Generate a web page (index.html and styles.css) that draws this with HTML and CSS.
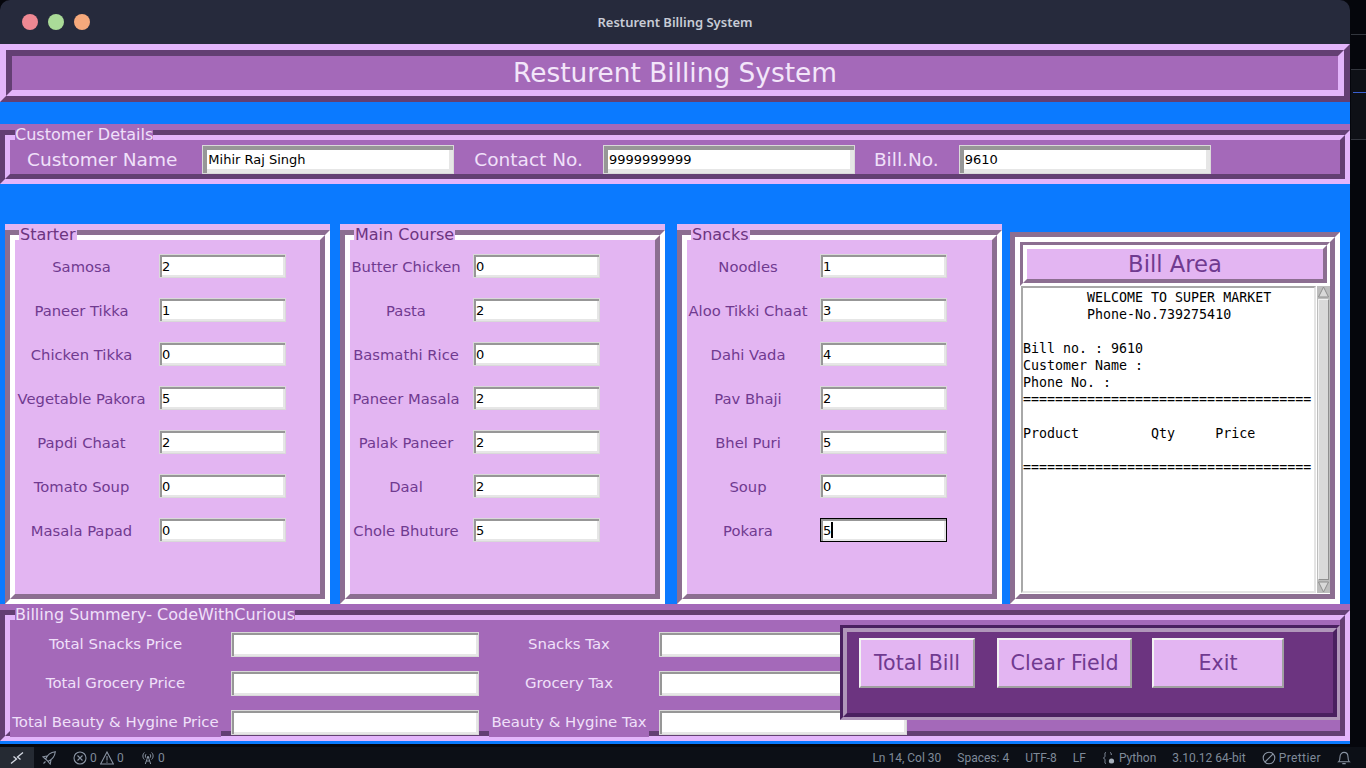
FILE: index.html
```html
<!DOCTYPE html>
<html lang="en">
<head>
<meta charset="utf-8">
<title>Resturent Billing System</title>
<link rel="stylesheet" href="styles.css">
</head>
<body>
<div class="screen">
  <div class="top">
    <div class="window">
      <header class="titlebar">
        <div class="lights"><span class="light red"></span><span class="light green"></span><span class="light orange"></span></div>
        <div class="wintitle">Resturent Billing System</div>
      </header>
      <div class="app">
        <div class="heading"><div class="heading-in">Resturent Billing System</div></div>

        <section class="lframe customer">
          <div class="legend">Customer Details</div>
          <div class="ridge"><div class="ridge-in customer-row">
            <div class="clabel first">Customer Name</div><div class="entry big">Mihir Raj Singh</div>
            <div class="clabel">Contact No.</div><div class="entry big">9999999999</div>
            <div class="clabel third">Bill.No.</div><div class="entry big">9610</div>
          </div></div>
        </section>

        <div class="mainrow">
          <section class="panel starter">
            <div class="plegend">Starter</div>
            <div class="pridge"><div class="pridge-in items">
              <div class="ilabel">Samosa</div><div class="entry">2</div>
              <div class="ilabel">Paneer Tikka</div><div class="entry">1</div>
              <div class="ilabel">Chicken Tikka</div><div class="entry">0</div>
              <div class="ilabel">Vegetable Pakora</div><div class="entry">5</div>
              <div class="ilabel">Papdi Chaat</div><div class="entry">2</div>
              <div class="ilabel">Tomato Soup</div><div class="entry">0</div>
              <div class="ilabel">Masala Papad</div><div class="entry">0</div>
            </div></div>
          </section>
          <section class="panel main">
            <div class="plegend">Main Course</div>
            <div class="pridge"><div class="pridge-in items">
              <div class="ilabel">Butter Chicken</div><div class="entry">0</div>
              <div class="ilabel">Pasta</div><div class="entry">2</div>
              <div class="ilabel">Basmathi Rice</div><div class="entry">0</div>
              <div class="ilabel">Paneer Masala</div><div class="entry">2</div>
              <div class="ilabel">Palak Paneer</div><div class="entry">2</div>
              <div class="ilabel">Daal</div><div class="entry">2</div>
              <div class="ilabel">Chole Bhuture</div><div class="entry">5</div>
            </div></div>
          </section>
          <section class="panel snacks">
            <div class="plegend">Snacks</div>
            <div class="pridge"><div class="pridge-in items">
              <div class="ilabel">Noodles</div><div class="entry">1</div>
              <div class="ilabel">Aloo Tikki Chaat</div><div class="entry">3</div>
              <div class="ilabel">Dahi Vada</div><div class="entry">4</div>
              <div class="ilabel">Pav Bhaji</div><div class="entry">2</div>
              <div class="ilabel">Bhel Puri</div><div class="entry">5</div>
              <div class="ilabel">Soup</div><div class="entry">0</div>
              <div class="ilabel">Pokara</div><div class="entry focus">5<span class="caret"></span></div>
            </div></div>
          </section>
          <section class="panel bill">
            <div class="pridge"><div class="pridge-in billin">
              <div class="billhead"><div class="billhead-in">Bill Area</div></div>
              <div class="billbody">
                <pre class="billtext">        WELCOME TO SUPER MARKET
        Phone-No.739275410

Bill no. : 9610
Customer Name : 
Phone No. : 
====================================

Product         Qty     Price

====================================</pre>
                <div class="scrollbar">
                  <svg class="arrow" viewBox="0 0 13 12" width="13" height="12"><path d="M6.5 1 L11.5 11 H1.5 Z" fill="#d9d9d9" stroke="#8f8f8f" stroke-width="1"/></svg>
                  <div class="thumb"></div>
                  <svg class="arrow" viewBox="0 0 13 12" width="13" height="12"><path d="M1.5 1 H11.5 L6.5 11 Z" fill="#d9d9d9" stroke="#8f8f8f" stroke-width="1"/></svg>
                </div>
              </div>
            </div></div>
          </section>
        </div>

        <section class="lframe summary">
          <div class="legend">Billing Summery- CodeWithCurious</div>
          <div class="ridge"><div class="ridge-in sumgrid">
            <div class="slabel">Total Snacks Price</div><div class="entry wide"></div>
            <div class="slabel">Snacks Tax</div><div class="entry wide"></div>
            <div class="slabel">Total Grocery Price</div><div class="entry wide"></div>
            <div class="slabel">Grocery Tax</div><div class="entry wide"></div>
            <div class="slabel">Total Beauty &amp; Hygine Price</div><div class="entry wide"></div>
            <div class="slabel">Beauty &amp; Hygine Tax</div><div class="entry wide"></div>
          </div></div>
          <div class="btnbox"><div class="btnbox-in">
            <button class="btn b1">Total Bill</button>
            <button class="btn b2">Clear Field</button>
            <button class="btn b3">Exit</button>
          </div></div>
        </section>
      </div>
    </div>
    <aside class="strip">
      <div class="strip-a"></div>
      <div class="strip-b"><div class="strip-blue"></div></div>
    </aside>
  </div>
  <footer class="status">
    <div class="remote">
      <svg viewBox="0 0 14 14" width="14" height="14"><path d="M1 12.5 L6.5 8 L3.5 5.5 M13 1.5 L7.5 6 L10.5 8.5" fill="none" stroke="#d5dae3" stroke-width="1.3"/></svg>
    </div>
    <div class="sleft">
      <svg class="rocket" viewBox="0 0 14 14" width="14" height="14"><path d="M13.3 .7 C8.5 1.2 5.3 4 3.6 8 L6 10.4 C10 8.7 12.8 5.5 13.3 .7 Z M4.8 5 L1 5.8 L3.5 8 M9 9.2 L8.2 13 L6 10.5 M3.5 10.5 L1.5 12.5" fill="none" stroke="#8a94a3" stroke-width="1.1"/></svg>
      <svg class="err" viewBox="0 0 14 14" width="14" height="14"><circle cx="7" cy="7" r="6" fill="none" stroke="#8a94a3" stroke-width="1.1"/><path d="M4.5 4.5 L9.5 9.5 M9.5 4.5 L4.5 9.5" stroke="#8a94a3" stroke-width="1.1"/></svg>
      <span class="num">0</span>
      <svg class="warn" viewBox="0 0 14 14" width="14" height="14"><path d="M7 1 L13.4 13 H.6 Z M7 5 V9.5 M7 10.5 V11.8" fill="none" stroke="#8a94a3" stroke-width="1.1"/></svg>
      <span class="num">0</span>
      <svg class="radio" viewBox="0 0 14 14" width="14" height="14"><path d="M4.3 13 L7 5 L9.7 13 M5.3 10 H8.7 M3.4 1.5 C1.4 3.5 1.4 6.5 3.4 8.5 M10.6 1.5 C12.6 3.5 12.6 6.5 10.6 8.5 M5 3.2 C4.1 4.2 4.1 5.8 5 6.8 M9 3.2 C9.9 4.2 9.9 5.8 9 6.8" fill="none" stroke="#8a94a3" stroke-width="1"/></svg>
      <span class="num">0</span>
    </div>
    <div class="sright">
      <span>Ln 14, Col 30</span>
      <span>Spaces: 4</span>
      <span>UTF-8</span>
      <span>LF</span>
      <span class="pair"><svg viewBox="0 0 14 14" width="14" height="14"><path d="M4 1.5 C2.5 1.5 3 3 3 4.5 C3 6 2.5 6.5 1.5 7 C2.5 7.5 3 8 3 9.5 C3 11 2.5 12.5 4 12.5 M8 1.5 C9 1.5 9.3 2.5 9.3 4" fill="none" stroke="#8a94a3" stroke-width="1"/><circle cx="9.5" cy="10" r="2.6" fill="#a5aeba"/></svg>Python</span>
      <span>3.10.12 64-bit</span>
      <span class="pair"><svg viewBox="0 0 14 14" width="14" height="14"><circle cx="7" cy="7" r="5.8" fill="none" stroke="#8a94a3" stroke-width="1.1"/><path d="M3 11 L11 3" stroke="#8a94a3" stroke-width="1.1"/></svg><span class="pretty">Prettier</span></span>
      <svg class="bell" viewBox="0 0 14 14" width="14" height="14"><path d="M1.6 10.8 C3 9.6 3 8 3 6 C3 3 5 1.4 7 1.4 C9 1.4 11 3 11 6 C11 8 11 9.6 12.4 10.8 Z M5.3 12.6 H8.7" fill="none" stroke="#8a94a3" stroke-width="1.1"/></svg>
    </div>
  </footer>
</div>
</body>
</html>
```
FILE: styles.css
```css
* { box-sizing: border-box; }
html, body { margin: 0; padding: 0; background: #05060c; overflow: hidden; }
body { font-family: "DejaVu Sans", sans-serif; }

.screen { width: 1366px; height: 768px; display: flex; flex-direction: column; background: #05060c; }
.top { display: flex; height: 744px; }
.window { width: 1350px; display: flex; flex-direction: column; }

.titlebar { height: 44px; background: #262a3c; border-radius: 10px 10px 0 0; display: flex; align-items: center; position: relative; justify-content: center; }
.lights { position: absolute; left: 22px; top: 14px; display: flex; gap: 10px; }
.light { width: 16px; height: 16px; border-radius: 50%; }
.red { background: #ef8893; }
.green { background: #aadb98; }
.orange { background: #f6a97c; }
.wintitle { font-family: "Noto Sans", sans-serif; font-weight: 600; font-size: 13px; color: #c8ccd6; }

.app { height: 700px; background: #0b7aff; }

.heading { height: 58px; border: 6px solid; border-color: #e3b5fb #633f73 #633f73 #e3b5fb; }
.heading-in { height: 46px; border: 6px solid; border-color: #633f73 #e3b5fb #e3b5fb #633f73; background: #a469b9; color: #f3e6fa; font-size: 26.4px; line-height: 33px; text-align: center; }

.lframe { position: relative; background: #a469b9; padding-top: 6px; }
.customer { margin-top: 22px; height: 60px; }
.summary { height: 137px; }
.legend { position: absolute; left: 15px; top: 2px; height: 14px; background: #a469b9; color: #f0e0fa; font-size: 16px; line-height: 17px; white-space: nowrap; z-index: 1; }
.ridge { height: 100%; border: 5px solid; border-color: #633f73 #e3b5fb #e3b5fb #633f73; }
.ridge-in { height: 100%; border: 5px solid; border-color: #e3b5fb #633f73 #633f73 #e3b5fb; background: #a469b9; }

.customer-row { display: flex; align-items: flex-start; padding-top: 5px; }
.clabel { color: #f0e0fa; font-size: 18.5px; line-height: 29px; margin: 0 20px 0 20px; white-space: nowrap; }
.clabel.first { margin: 0 25px 0 17px; }
.clabel.third { margin: 0 20px 0 19px; }

.entry { width: 127px; height: 24px; background: #fff; border: 1px solid #d9d9d9; box-shadow: inset 2px 2px 0 #979797, inset -2px -2px 0 #e6e6e6; color: #000; font-size: 13px; line-height: 24px; padding-left: 2px; white-space: nowrap; position: relative; }
.entry.big { width: 252px; height: 29px; box-shadow: inset 4px 4px 0 #979797, inset -4px -4px 0 #e6e6e6; line-height: 27px; padding-left: 5px; }
.entry.wide { width: 248px; height: 25px; }
.entry.focus { border-color: #000; }
.caret { display: inline-block; width: 2px; height: 16px; background: #000; position: absolute; top: 3px; margin-left: 0; }

.mainrow { display: flex; margin-top: 40px; padding-left: 5px; height: 380px; }
.panel { position: relative; width: 325px; height: 380px; padding-top: 6px; background: #e3b5f2; }
.panel.main { margin-left: 10px; }
.panel.snacks { margin-left: 12px; }
.panel.bill { width: 330px; height: 372px; margin-left: 8px; margin-top: 8px; padding-top: 0; }
.plegend { position: absolute; left: 14px; top: 0; height: 16px; padding: 0 1px; background: #e3b5f2; color: #6c3480; font-size: 16px; line-height: 21px; white-space: nowrap; z-index: 1; }
.pridge { height: 100%; border: 5px solid; border-color: #8c6e91 #fff #fff #8c6e91; }
.pridge-in { height: 100%; border: 5px solid; border-color: #fff #8c6e91 #8c6e91 #fff; background: #e3b5f2; }

.items { display: grid; grid-auto-rows: 24px; column-gap: 13px; row-gap: 20px; padding: 14px 0 0 2px; justify-content: start; align-items: center; }
.starter .items { grid-template-columns: 129px 127px; }
.main .items { grid-template-columns: 108px 127px; }
.snacks .items { grid-template-columns: 118px 127px; }
.ilabel { font-size: 14.75px; line-height: 18px; padding-top: 1px; color: #703a90; text-align: center; white-space: nowrap; display: flex; justify-content: center; }

.billin { background: #fff; display: flex; flex-direction: column; }
.billhead { height: 44px; border: 3px solid; border-color: #8c6e91 #fff #fff #8c6e91; flex: none; }
.billhead-in { height: 38px; border: 4px solid; border-color: #fff #8c6e91 #8c6e91 #fff; background: #e3b5f2; color: #703a90; font-size: 22.67px; line-height: 31px; text-align: center; }
.billbody { display: flex; height: 307px; padding-left: 1px; }
.billtext { width: 295px; height: 307px; margin: 0; border: 2px solid; border-color: #a8a8a8 #e4e4e4 #e4e4e4 #a8a8a8; padding: 1px 0 0 0; font-family: "DejaVu Sans Mono", monospace; font-size: 13.3px; line-height: 17px; color: #000; overflow: hidden; }
.scrollbar { width: 13px; margin-left: 1px; background: #bdbdbd; display: flex; flex-direction: column; }
.arrow { display: block; flex: none; }
.thumb { flex: 1; margin: 1px; background: #d9d9d9; border: 1px solid; border-color: #f0f0f0 #8f8f8f #8f8f8f #f0f0f0; }

.sumgrid { display: grid; grid-template-columns: 211px 248px 160px 248px; grid-auto-rows: 25px; column-gap: 10px; row-gap: 14px; padding-top: 12px; justify-content: start; align-items: center; }
.slabel { height: 28px; line-height: 27px; background: #a469b9; color: #f0e0fa; font-size: 14.9px; text-align: center; white-space: nowrap; }

.btnbox { position: absolute; left: 840px; top: 21px; width: 500px; height: 95px; border: 3px solid; border-color: #4a2060 #b096ba #b096ba #4a2060; z-index: 2; }
.btnbox-in { height: 100%; border: 4px solid; border-color: #b096ba #4a2060 #4a2060 #b096ba; background: #6c3480; display: flex; align-items: flex-start; padding: 6px 0 0 12px; }
.btn { height: 50px; margin: 0; padding: 0; background: #e3b5f2; color: #703a90; font-family: "DejaVu Sans", sans-serif; font-size: 20.6px; border: 2px solid; border-color: #f2f2f2 #a0a0a0 #a0a0a0 #f2f2f2; }
.b1 { width: 116px; }
.b2 { width: 135px; margin-left: 22px; }
.b3 { width: 132px; margin-left: 20px; }

.strip { width: 16px; display: flex; flex-direction: column; }
.strip-a { height: 35px; margin-left: 1px; border-bottom: 1px solid #33363e; }
.strip-b { height: 71px; margin-top: 34px; margin-left: 1px; background: #0e1016; border-top: 1px solid #33363e; border-bottom: 1px solid #33363e; padding-top: 22px; }
.strip-blue { height: 1px; margin-left: 2px; background: #3a5fd0; }

.status { margin-top: 3px; height: 21px; background: #0c0f16; display: flex; align-items: center; color: #7f8a99; font-family: "Roboto", sans-serif; font-size: 12px; }
.remote { width: 34px; height: 21px; background: #252a33; display: flex; align-items: center; justify-content: center; }
.sleft { display: flex; align-items: center; margin-left: 8px; }
.sleft svg { display: block; }
.num { margin-left: 3px; width: 7px; }
.err { margin-left: 17px; }
.warn { margin-left: 3px; }
.radio { margin-left: 17px; }
.sright { margin-left: auto; display: flex; align-items: center; gap: 16px; padding-right: 15px; }
.pair { display: flex; align-items: center; gap: 3px; }
.pretty { letter-spacing: .4px; }
.pair svg, .bell { display: block; }
```
